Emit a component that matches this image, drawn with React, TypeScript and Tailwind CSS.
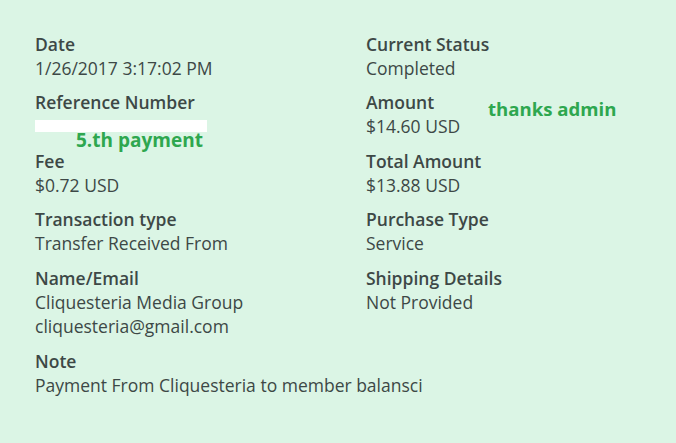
import React from "react";

type Field = { label: string; lines: React.ReactNode[] };

const LEFT: Field[] = [
  { label: "Date", lines: ["1/26/2017 3:17:02 PM"] },
  {
    label: "Reference Number",
    lines: [<div key="r" className="h-[24.5px] flex items-center"><div className="h-[12px] w-[172px] bg-white" /></div>],
  },
  { label: "Fee", lines: ["$0.72 USD"] },
  { label: "Transaction type", lines: ["Transfer Received From"] },
  { label: "Name/Email", lines: ["Cliquesteria Media Group", "cliquesteria@gmail.com"] },
];

const RIGHT: Field[] = [
  { label: "Current Status", lines: ["Completed"] },
  { label: "Amount", lines: ["$14.60 USD"] },
  { label: "Total Amount", lines: ["$13.88 USD"] },
  { label: "Purchase Type", lines: ["Service"] },
  { label: "Shipping Details", lines: ["Not Provided"] },
];

function Item({ f }: { f: Field }) {
  return (
    <div className="flex flex-col">
      <div className="font-semibold leading-[23px]">{f.label}</div>
      {f.lines.map((l, i) =>
        typeof l === "string" ? (
          <div key={i} className="leading-[24.5px]">
            {l}
          </div>
        ) : (
          l
        )
      )}
    </div>
  );
}

export default function App() {
  return (
    <div
      className="relative w-[676px] h-[443px] bg-[#dbf5e5] text-[#3d4846] text-[17.5px] px-[35px] pt-[32.5px]"
      style={{ fontFamily: '"Open Sans", "Liberation Sans", sans-serif' }}
    >
      <div className="grid grid-cols-[331px_1fr] gap-y-[11px]">
        {LEFT.map((f, i) => (
          <React.Fragment key={i}>
            <Item f={f} />
            <Item f={RIGHT[i]} />
          </React.Fragment>
        ))}
        <div className="col-span-2">
          <Item f={{ label: "Note", lines: ["Payment From Cliquesteria to member balansci"] }} />
        </div>
      </div>

      {/* annotations */}
      <div className="absolute left-[76px] top-[126px] text-[19px] font-bold text-[#2ea74f]">5.th payment</div>
      <div className="absolute left-[488px] top-[95px] text-[18.6px] font-bold text-[#2ea74f]">thanks admin</div>
    </div>
  );
}
